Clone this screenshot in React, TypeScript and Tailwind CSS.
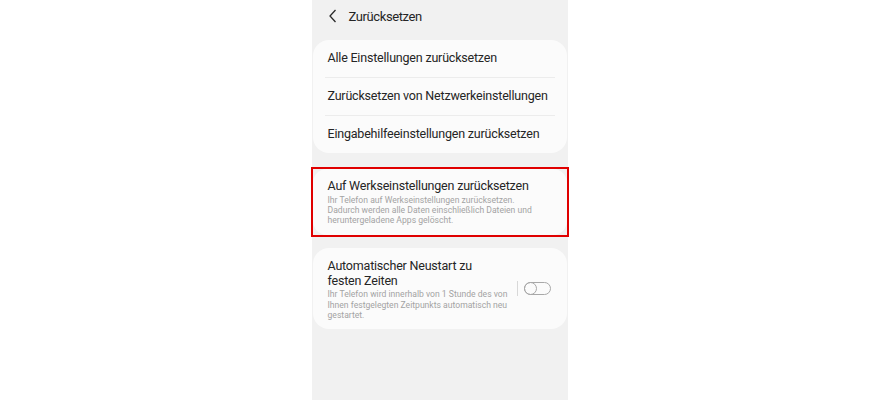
import React from "react";

const font = { fontFamily: "Roboto, 'Noto Sans', sans-serif" };

export default function App() {
  return (
    <div className="w-full h-[400px] bg-white flex justify-center" style={font}>
      <div className="w-[256px] h-full bg-[#f1f1f1] flex flex-col">
        <div className="h-[33px] flex items-center pl-[17px] shrink-0">
          <svg width="8" height="14" viewBox="0 0 8 14" className="mt-[-1px]">
            <path d="M6.5 1 L1 7 L6.5 13" fill="none" stroke="#2a2a2a" strokeWidth="1.3" />
          </svg>
          <span className="ml-[12px] text-[13px] tracking-[-0.4px] text-[#252525] leading-none">Zurücksetzen</span>
        </div>

        <div className="mt-[7px] mx-[1px] bg-[#fbfbfb] rounded-[16px] flex flex-col">
          {[
            "Alle Einstellungen zurücksetzen",
            "Zurücksetzen von Netzwerkeinstellungen",
            "Eingabehilfeeinstellungen zurücksetzen",
          ].map((t, i) => (
            <div key={t} className="flex flex-col">
              {i > 0 && <div className="mx-[12px] h-px bg-[#ececec]" />}
              <div className="h-[37px] flex items-center pl-[15px] text-[12.5px] tracking-[-0.2px] text-[#252525]">{t}</div>
            </div>
          ))}
        </div>

        <div className="mt-[14px] mx-[-1px] border-2 border-[#e00000] h-[70px] flex">
          <div className="flex-1 bg-[#fbfbfb] rounded-[14px] pl-[15px] pt-[9px]">
            <div className="text-[12.5px] tracking-[-0.2px] leading-[16px] text-[#252525]">Auf Werkseinstellungen zurücksetzen</div>
            <div className="mt-[1px] text-[8.6px] leading-[10px] text-[#a3a3a3] pr-[20px]">
              Ihr Telefon auf Werkseinstellungen zurücksetzen. Dadurch werden alle Daten einschließlich Dateien und heruntergeladene Apps gelöscht.
            </div>
          </div>
        </div>

        <div className="mt-[11px] mx-[1px] bg-[#fbfbfb] rounded-[16px] h-[81px] flex items-start pl-[15px] pt-[10px]">
          <div className="w-[183px]">
            <div className="text-[12.5px] tracking-[-0.2px] leading-[15px] text-[#252525] pr-[20px]">Automatischer Neustart zu festen Zeiten</div>
            <div className="mt-[1px] text-[8.6px] leading-[10.5px] text-[#a3a3a3]">
              Ihr Telefon wird innerhalb von 1 Stunde des von Ihnen festgelegten Zeitpunkts automatisch neu gestartet.
            </div>
          </div>
          <div className="ml-[6px] mt-[23px] w-px h-[15px] bg-[#d8d8d8]" />
          <div className="ml-[6px] mt-[24px] w-[27px] h-[13px] rounded-full border border-[#a8a8a8] relative">
            <div className="absolute left-[-1px] top-[-1px] w-[13px] h-[13px] rounded-full border border-[#a8a8a8]" />
          </div>
        </div>
      </div>
    </div>
  );
}
